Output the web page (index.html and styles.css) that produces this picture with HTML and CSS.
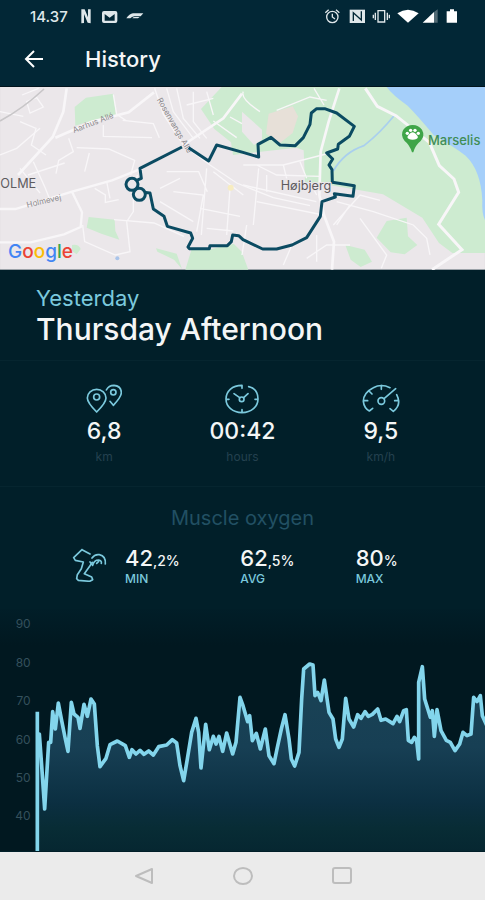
FILE: index.html
```
<!doctype html>
<html lang="en">

  <head>
    <title>History</title>
    <meta charset="utf-8">
    <meta name="viewport" content="width=device-width, initial-scale=1" />
    <link rel="stylesheet" href="styles.css">
  </head>

  <body>

    <div class='all'>

      <header class='top'>
        <div class='status'>
          <span class='status-time'>14.37</span>
          <svg class='status-left' width="66" height="16" viewBox="0 0 198 48" fill="#dfe7ea">
            <path d="M4 4h10l10 24V4h8v42l-9-2L12 18v27l-8 1z" />
            <path fill-rule="evenodd" d="M72 9h34q6 0 6 6v24q0 6-6 6H72q-6 0-6-6V15q0-6 6-6zM74 18v20h30V18L89 29z" />
            <path d="M79 17l10 7 10-7z" />
            <path d="M139 31q9-14 20-15h31l-8 9h-19q-8 1-12 6zM157 31q2-4 7-4h15l-5 4z" />
          </svg>
          <svg class='status-right' width="136" height="16" viewBox="0 0 408 48" fill="none" stroke="#dfe7ea" stroke-width="4">
            <circle cx="25" cy="27" r="17" />
            <path d="M25 17v10l8 6M4 14l10-9M46 14l-10-9" />
            <path d="M77 5h46v40H77z" fill="#dfe7ea" stroke="none" />
            <path d="M88 39V14l24 22V10" stroke="#022736" />
            <path d="M162 8h20v34h-20zM154 14v22M190 14v22M148 20v11M196 20v11" />
            <g fill="#fff" stroke="none">
              <path d="M220 16q32-22 64 0L252 44z" />
              <path d="M296 44L330 12v32z" />
              <path d="M330 12l11-8v40h-11z" fill="#526a74" />
              <path d="M368 10h10V4h12v6h9v34h-31z" />
            </g>
          </svg>
        </div>
        <div class='title-row'>
          <button class='back' type='button' aria-label='Back'>
            <svg width="20" height="18" viewBox="0 0 20 18" fill="none" stroke="#fff" stroke-width="2">
              <path d="M19 9H2M10 1L2 9l8 8" />
            </svg>
          </button>
          <h1 class='title'>History</h1>
        </div>
      </header>

      <svg class='map' viewBox="0 6 1455 548" role="img" aria-label="Route map">
        <rect y="6" width="1455" height="548" fill="#ebe7ea" />

        <!-- parks and woods -->
        <g fill="#cdebd0">
          <path d="M224 66l34-28 82-12 8 66-70 14-52 16z" />
          <path d="M665 6h272l80 0h150l70 60 240 140v298h-120l-40-30-50-76-118-70-160-28-74-8-4-96-22-8-190 22-6-38-50-40-40-60z" />
          <path d="M266 396l78 8 2 34 12 26-54-18-44-18z" />
          <path d="M575 492l60 0 66-16 24 24 20 54H556z" />
          <path d="M468 490l62 16 16 46-24-28-50-24zM1036 480l58 14 22 36-34 16-30-22zM1160 408l60-10 4 56 28 26-38 28-42-6-42-44z" />
          <path d="M216 480q20-4 26 12l-12 16-14-10z" />
        </g>
        <path d="M806 86l72-22 16 30-16 50-38 30-42-28z" fill="#e7e0d8" />
        <path d="M680 6h46v76l-44-32z" fill="#cdebd0" />
        <path d="M726 80l60 54v30l-24 16-36-40z" fill="#ebe7ea" />

        <!-- sea -->
        <path d="M1160 6h295v400q-10-20-8-60-4-90-50-134-34-26-96-62-50-60-78-88-46-32-63-56z" fill="#a5cffa" />
        <path d="M1182 92q-40 50-90 90-60 20-92 76" fill="none" stroke="#a9cfee" stroke-width="5" />

        <!-- roads -->
        <g fill="none" stroke="#f8f6f8" stroke-width="4">
          <path d="M200 10l-10 70-32 76-104 114M166 158l110-48 110-28 76-60" stroke-width="8" />
          <path d="M0 372h46l170-52 120-34 90-36M216 320l30 62-4 44-50 22-100 24H0" stroke-width="7" />
          <path d="M464 10l26 78 60 92 80 60 80 54 110 44 110 24" />
          <path d="M550 180l120-80 56-74M1018 10l-32 100-24 90-4 130 14 60 30 80-6 84" stroke-width="8" />
          <path d="M1096 10l36 54 56 28 100 80 30 70 44 40 14 40-60 96 70 76-90 60" stroke-width="9" />
          <path d="M0 80l70 14M66 30l50-20M80 50l30-12 20 28-40 18zM60 110l48 20-14 50 44 30M340 28l10 60 30 20M368 106l92 10 18 42M310 120v34l146 4" />
          <path d="M206 160l14 40-44 26-8 40M268 204l-14 56M230 188l96 4 78 34-12 44M100 230l36 80 12 30M60 250l60 74M84 270l110-36M0 210l50-20 70-60" />
          <path d="M320 290l10 50M284 310l32 20v22l40-8M400 330v50l-20 30 10 90-44 10-92-40-6-50M342 404l120 10 90 40M412 270l-8 60" />
          <path d="M500 10l20 70 60 80M530 10l20 90 50 60M580 20v90l40 50M620 20l20 70M560 60l80-20M640 108l70 50M690 96l36 20" />
          <path d="M500 260h96l26 60M520 320l90 10-20 110M540 280l-60 30M620 250l-16 200M600 370l120 24M690 310l-10 140M620 430l80 8M480 350l100 60M640 260l90 70" />
          <path d="M730 240l120 0 140-36M770 240l60 30 130 4M776 250l-16 170M800 270v50M850 240l10 40M900 230l20 50M729 300l220 50M770 350l200 40M930 290l20 40" />
          <path d="M740 420l-14 90M850 540l30-70M920 520l60-40h70M950 450v80M1000 420l80-90 60 16M1010 350l110 30 120 40 40 40 10 50M1080 400l80 110-16 40M1050 360l-40 60" />
          <path d="M780 80q-60-40-50-60M830 76l100-40 50 10M942 10l30 50" />
        </g>
        <path d="M0 108Q70 70 132 12" fill="none" stroke="#c8c6c8" stroke-width="5" />
        <circle cx="692" cy="308" r="9" fill="#f7ecc0" />
        <circle cx="352" cy="520" r="6" fill="#a9c4ea" />

        <g class='road-label'>
          <text transform="translate(222 144) rotate(-21)">Aarhus Allé</text>
          <text transform="translate(470 44) rotate(60)">Rosenvangs Allé</text>
          <text transform="translate(82 368) rotate(-13)">Holmevej</text>
        </g>

        <!-- the run -->
        <g fill="none" stroke="#0b4b62" stroke-width="9" stroke-linejoin="round">
          <path d="M410 286L424 280 420 250 546 186M566 188L626 228 650 180 729 202 776 216 774 178 813 157 840 180 886 182 910 158 930 118 934 84 950 71 974 71 1010 84 1063 124 1048 154 1015 178 1013 192 980 204 998 222 987 240 996 254 997 292 1063 302 1059 334 1003 326 1006 336 966 350 961 394 920 458 876 480 830 492 788 492 729 464 716 452 698 450 694 470 682 482 630 482 628 491 568 491 564 486 578 460 572 444 502 424 492 394 460 372 450 324 430 322" />
          <circle cx="396" cy="298" r="18" fill="#ebe7ea" />
          <circle cx="418" cy="328" r="18" fill="#ebe7ea" />
        </g>

        <text class='place' x="1" y="310">OLME</text>
        <text class='place' x="842" y="316">Højbjerg</text>
        <path d="M1236 202q-8-24-22-34-14-18-4-34 10-14 28-14t28 14q10 18-4 34-16 12-22 34z" fill="#3fa548" />
        <g fill="#fff">
          <path d="M1238 142q10 2 16 14-2 8-16 8t-16-8q6-12 16-14z" />
          <circle cx="1222" cy="145" r="5" />
          <circle cx="1232" cy="136" r="5" />
          <circle cx="1245" cy="136" r="5" />
          <circle cx="1255" cy="145" r="5" />
        </g>
        <text class='park' x="1284" y="180">Marselis</text>
        <text class='google' x="24" y="519"><tspan fill="#4285f4">G</tspan><tspan fill="#ea4335">o</tspan><tspan fill="#fbbc05">o</tspan><tspan fill="#4285f4">g</tspan><tspan fill="#34a853">l</tspan><tspan fill="#ea4335">e</tspan></text>
      </svg>

      <main class='content'>

        <section class='heading'>
          <p class='day'>Yesterday</p>
          <h2 class='name'>Thursday Afternoon</h2>
        </section>

        <section class='stats'>
          <div class='stat'>
            <svg class='icon' width="36" height="30" viewBox="0 0 108 90">
              <path d="M32 84Q4 56 4 42a28 26 0 0 1 56 0Q60 56 32 84z" />
              <circle cx="32" cy="39" r="9" />
              <path d="M61 18Q68 4 84 4q22 2 22 22 0 12-24 38L72 52" />
              <circle cx="82" cy="25" r="8" />
            </svg>
            <span class='stat-value'>6,8</span>
            <span class='unit'>km</span>
          </div>
          <div class='stat'>
            <svg class='icon' width="36" height="30" viewBox="0 0 108 90">
              <path d="M54 13V4C24 4 6 22 6 45s20 41 48 41 48-18 48-41C102 26 92 12 74 8M6 46h9M102 46h-9M54 86v-9M30 29l17 12M72 29L59 41" />
              <circle cx="53" cy="46" r="7" />
            </svg>
            <span class='stat-value'>00:42</span>
            <span class='unit'>hours</span>
          </div>
          <div class='stat'>
            <svg class='icon' width="38" height="30" viewBox="0 0 114 90">
              <path d="M84 11Q58-2 34 11 4 26 4 52q2 20 18 29l10-8M104 32q16 30-10 50l-10-8M4 50h13M110 50h-12M58 5v11M21 21l9 9M67 43l34-29" />
              <circle cx="58" cy="51" r="10" />
            </svg>
            <span class='stat-value'>9,5</span>
            <span class='unit'>km/h</span>
          </div>
        </section>

        <section class='oxygen'>
          <h3 class='oxygen-title'>Muscle oxygen</h3>
          <div class='oxygen-row'>
            <svg class='icon' width="36" height="34" viewBox="0 0 108 102">
              <path d="M30 5L5 29l5 8 24 5-6 20-12 18-2 12 5 5 34 3 9-5-3-8-22-10 16-22 8-12M30 5l24 13" />
              <path d="M54 42l8 10M60 30q8-12 22-10 20 4 18 28M62 52q4-16 18-16 10 2 8 10M74 46l6-6" />
            </svg>
            <div class='reading'>
              <span class='reading-value'>42<small>,2%</small></span>
              <span class='reading-label'>MIN</span>
            </div>
            <div class='reading'>
              <span class='reading-value'>62<small>,5%</small></span>
              <span class='reading-label'>AVG</span>
            </div>
            <div class='reading'>
              <span class='reading-value'>80<small>%</small></span>
              <span class='reading-label'>MAX</span>
            </div>
          </div>
        </section>

        <svg class='chart' viewBox="0 30 1455 726" role="img" aria-label="Muscle oxygen over time">
          <defs>
            <linearGradient id="back" x1="0" y1="0" x2="0" y2="1">
              <stop offset="0" stop-color="#011e28" />
              <stop offset="0.15" stop-color="#011820" />
              <stop offset="1" stop-color="#011820" />
            </linearGradient>
            <linearGradient id="area" gradientUnits="userSpaceOnUse" x1="0" y1="190" x2="0" y2="756">
              <stop offset="0" stop-color="#1b4456" />
              <stop offset="0.45" stop-color="#173f54" />
              <stop offset="0.75" stop-color="#0b2f41" />
              <stop offset="0.88" stop-color="#082c35" />
              <stop offset="1" stop-color="#062731" />
            </linearGradient>
          </defs>
          <rect y="30" width="1455" height="726" fill="url(#back)" />
          <path fill="url(#area)" stroke="#83d5ec" stroke-width="11" stroke-linejoin="round" d="M112 780V338M112 780V405L118 405 125 500 134 630 146 430 152 430 158 338 166 390 175 312 185 365 196 420 204 457 214 310 222 345 234 355 240 388 252 316 262 352 273 300 283 315 292 440 300 503 318 478 330 437 352 426 376 440 388 475 396 452 408 465 420 454 432 466 446 456 460 468 476 443 500 438 517 422 530 432 540 500 551 545 562 480 575 400 588 358 596 400 603 507 617 376 628 452 640 412 648 435 657 412 668 457 680 402 698 465 708 430 720 295 729 320 743 368 749 350 757 425 769 403 781 450 796 390 807 470 822 494 831 450 844 390 855 347 867 420 874 480 884 501 897 460 905 300 911 210 929 195 939 198 945 290 953 280 963 305 973 243 987 340 999 360 1007 420 1017 445 1027 420 1037 298 1047 360 1061 384 1073 347 1083 358 1095 338 1105 352 1117 346 1133 330 1143 364 1157 360 1179 374 1191 352 1199 368 1211 335 1219 332 1225 424 1235 430 1243 415 1250 425 1256 480 1256 250 1267 203 1274 300 1291 355 1297 335 1303 412 1311 332 1323 395 1339 424 1351 430 1365 455 1379 435 1389 400 1401 410 1413 405 1421 295 1431 308 1441 290 1447 350 1465 390V780" />
          <g class='axis'>
            <text x="92" y="88">90</text>
            <text x="92" y="203">80</text>
            <text x="92" y="319">70</text>
            <text x="92" y="434">60</text>
            <text x="92" y="549">50</text>
            <text x="92" y="664">40</text>
          </g>
        </svg>

      </main>

      <nav class='system-nav'>
        <button class='system-button' type='button' aria-label='Back'>
          <svg width="20" height="18" viewBox="0 0 20 18"><path d="M18 2v14L2 9z" /></svg>
        </button>
        <button class='system-button' type='button' aria-label='Home'>
          <svg width="20" height="18" viewBox="0 0 20 18"><ellipse cx="10" cy="9" rx="9" ry="8" /></svg>
        </button>
        <button class='system-button' type='button' aria-label='Recent apps'>
          <svg width="20" height="18" viewBox="0 0 20 18"><rect x="1" y="1" width="18" height="15" rx="2" /></svg>
        </button>
      </nav>

    </div>
  </body>

</html>
```
FILE: styles.css
```
:root {
  --text-color: #f4f6f6;
  --accent-color: #7bc9dd;
  --background-color: #011f29;
  --header-color: #022736;
  --line-color: #06252f;
}

* {
  box-sizing: border-box;
}

body {
  margin: 0;
  color: var(--text-color);
  background: var(--background-color);
  font-family: Inter, "Liberation Sans", sans-serif;
}

h1, h2, h3, p {
  margin: 0;
  font-weight: normal;
}

button {
  display: flex;
  padding: 0;
  border: 0;
  background: none;
}

.all {
  display: flex;
  flex-direction: column;
  min-height: 100vh;
  overflow: hidden;
}

.top {
  background: var(--header-color);
  border-bottom: 1px solid #01141d;
}

.status {
  display: flex;
  align-items: center;
  height: 32px;
  padding: 0 25px 0 30px;
}

.status-time {
  font-size: 15px;
  font-weight: 500;
  color: #dfe7ea;
}

.status-left {
  margin-left: 12px;
}

.status-right {
  margin-left: auto;
}

.title-row {
  display: flex;
  align-items: center;
  gap: 41px;
  height: 54px;
  padding: 0 24px;
}

.title {
  font-size: 22px;
  font-weight: 500;
  line-height: 28px;
}

.map,
.chart {
  display: block;
  width: 100%;
}

/* map and chart texts are in drawing units, three to a pixel */
.road-label {
  font-size: 24px;
  fill: #8c898c;
}

.place {
  font-size: 38px;
  fill: #5d5b5f;
  stroke: #ebe7ea;
  stroke-width: 6px;
  paint-order: stroke;
}

.park {
  font-size: 39px;
  font-weight: 500;
  fill: #3f8d56;
}

.google {
  font-size: 57px;
  font-weight: 500;
}

.content {
  flex: 1;
}

.heading {
  padding: 14px 36px 14px;
  border-bottom: 1px solid var(--line-color);
}

.day {
  font-size: 22px;
  line-height: 28px;
  color: var(--accent-color);
}

.name {
  font-size: 30px;
  font-weight: 500;
  line-height: 34px;
}

.stats {
  display: grid;
  grid-template-columns: repeat(3, 1fr);
  padding: 23px 35px 20px;
  border-bottom: 1px solid var(--line-color);
}

.stat {
  display: flex;
  flex-direction: column;
  align-items: center;
}

.icon {
  fill: none;
  stroke: var(--accent-color);
  stroke-width: 5px;
  stroke-linecap: round;
  stroke-linejoin: round;
}

.stat-value {
  font-size: 23px;
  font-weight: 500;
  line-height: 34px;
}

.unit {
  font-size: 12px;
  line-height: 18px;
  color: #24414f;
}

.oxygen {
  padding: 17px 0 24px;
}

.oxygen-title {
  font-size: 20px;
  line-height: 28px;
  text-align: center;
  color: #215063;
}

.oxygen-row {
  display: grid;
  grid-template-columns: 36px repeat(3, 1fr);
  align-items: center;
  column-gap: 17px;
  padding: 14px 31px 0 72px;
}

.reading {
  display: flex;
  flex-direction: column;
}

.reading-value {
  font-size: 22px;
  font-weight: 500;
  line-height: 24px;
}

.reading-value small {
  font-size: 14px;
}

.reading-label {
  font-size: 12px;
  line-height: 12px;
  font-weight: 500;
  color: var(--accent-color);
}

.axis {
  font-size: 36px;
  fill: #34505c;
  text-anchor: end;
}

.system-nav {
  display: flex;
  justify-content: center;
  align-items: center;
  gap: 79px;
  height: 48px;
  background: #ebebeb;
}

.system-button svg {
  fill: none;
  stroke: #bdbdbd;
  stroke-width: 2px;
  stroke-linejoin: round;
}
```
